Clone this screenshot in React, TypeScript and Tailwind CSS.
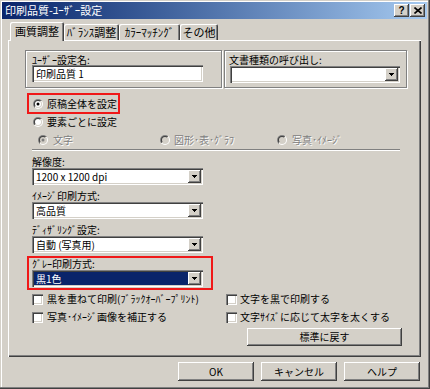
import React from "react";

// classic 3D edges
const SUNKEN = "shadow-[inset_1px_1px_0_#808080,inset_2px_2px_0_#404040,inset_-1px_-1px_0_#fff,inset_-2px_-2px_0_#d4d0c8]";
const RAISED = "shadow-[inset_-1px_-1px_0_#404040,inset_1px_1px_0_#fff,inset_-2px_-2px_0_#808080]";
const ETCHED = "border border-[#808080] shadow-[inset_1px_1px_0_#fff,1px_1px_0_#fff]";
const DISABLED = "text-[#808080] [text-shadow:1px_1px_0_#fff]";

function Arrow() {
    return (
        <svg width="5" height="3" viewBox="0 0 5 3" shapeRendering="crispEdges">
            <rect x="0" y="0" width="5" height="1" fill="#000" />
            <rect x="1" y="1" width="3" height="1" fill="#000" />
            <rect x="2" y="2" width="1" height="1" fill="#000" />
        </svg>
    );
}

function Select({ value, className, highlight }: { value: string; className: string; highlight?: boolean }) {
    return (
        <div className={`flex h-[17px] bg-white p-[2px] ${SUNKEN} ${className}`}>
            <div className={`flex-1 flex items-center pl-[2px] leading-none ${highlight ? "bg-[#0a246a] text-white" : ""}`}>
                {value}
            </div>
            <div className={`w-[13px] h-full bg-[#d4d0c8] flex items-center justify-center ${RAISED}`}>
                <Arrow />
            </div>
        </div>
    );
}

function Radio({ checked, disabled }: { checked?: boolean; disabled?: boolean }) {
    return (
        <svg width="10" height="10" viewBox="0 0 10 10" className="shrink-0">
            <defs>
                <linearGradient id="rOuter" x1="0" y1="0" x2="1" y2="1">
                    <stop offset="0.5" stopColor="#808080" />
                    <stop offset="0.5" stopColor="#ffffff" />
                </linearGradient>
                <linearGradient id="rInner" x1="0" y1="0" x2="1" y2="1">
                    <stop offset="0.5" stopColor="#404040" />
                    <stop offset="0.5" stopColor="#d4d0c8" />
                </linearGradient>
            </defs>
            <circle cx="5" cy="5" r="5" fill="url(#rOuter)" />
            <circle cx="5" cy="5" r="4" fill="url(#rInner)" />
            <circle cx="5" cy="5" r="3" fill={disabled ? "#d4d0c8" : "#fff"} />
            {checked && <circle cx="5" cy="5" r="1.5" fill={disabled ? "#808080" : "#000"} />}
        </svg>
    );
}

function Check() {
    return <div className={`w-[11px] h-[11px] shrink-0 bg-white ${SUNKEN}`} />;
}

function Button({ children, className }: { children: React.ReactNode; className: string }) {
    return (
        <div className={`flex items-center justify-center bg-[#d4d0c8] leading-none ${RAISED} ${className}`}>
            {children}
        </div>
    );
}

function Field({ label, value, highlight }: { label: string; value: string; highlight?: boolean }) {
    return (
        <div className="flex flex-col">
            <div className="h-[12px] leading-[12px]">{label}</div>
            <Select value={value} className="w-[171px]" highlight={highlight} />
        </div>
    );
}

const TABS = [
    { label: "ﾊﾞﾗﾝｽ調整", w: "w-[55px]" },
    { label: "ｶﾗｰﾏｯﾁﾝｸﾞ", w: "w-[61px]" },
    { label: "その他", w: "w-[38px]" },
];

export default function App() {
    return (
        <div className="w-[430px] h-[389px] overflow-hidden bg-[#d4d0c8] pt-[2px] pl-[2px] text-[10px] text-black font-['Noto_Sans_CJK_JP',sans-serif] shadow-[inset_-1px_-1px_0_#404040,inset_-2px_-2px_0_#808080,inset_1px_1px_0_#d4d0c8,inset_2px_2px_0_#fff]">
            {/* Title bar */}
            <div className="w-[425px] h-[17px] flex items-center pl-[3px] pr-[2px] bg-linear-to-r from-[#0a246a] to-[#a6caf0]">
                <span className="text-white text-[11px] leading-none">印刷品質-ﾕｰｻﾞｰ設定</span>
                <div className="ml-auto flex">
                    <Button className="w-[15px] h-[13px] font-bold text-[10px] font-['Liberation_Sans',sans-serif]">?</Button>
                    <Button className="w-[15px] h-[13px] ml-px">
                        <svg width="8" height="7" viewBox="0 0 8 7">
                            <path d="M0.5 0.5 L7.5 6.5 M7.5 0.5 L0.5 6.5" stroke="#000" strokeWidth="1.6" />
                        </svg>
                    </Button>
                </div>
            </div>

            {/* Tabs */}
            <div className="relative z-10 flex items-end h-[18px] mt-[3px] ml-[8px] text-[11px]">
                <div className="w-[54px] h-[19px] -mb-px flex items-center justify-center bg-[#d4d0c8] rounded-t-[2px] leading-none shadow-[inset_1px_1px_0_#fff,inset_-1px_0_0_#404040,inset_-2px_0_0_#808080]">
                    画質調整
                </div>
                {TABS.map((t) => (
                    <div
                        key={t.label}
                        className={`${t.w} h-[16px] flex items-center justify-center rounded-t-[2px] leading-none shadow-[inset_1px_1px_0_#fff,inset_-1px_0_0_#404040,inset_-2px_0_0_#808080]`}
                    >
                        {t.label}
                    </div>
                ))}
            </div>

            {/* Tab panel */}
            <div className="w-[413px] h-[317px] ml-[6px] pt-[10px] flex flex-col shadow-[inset_1px_1px_0_#fff,inset_-1px_-1px_0_#404040,inset_-2px_-2px_0_#808080]">
                {/* Name / document type */}
                <div className="flex ml-[17px]">
                    <div className={`w-[197px] h-[38px] pt-[4px] pl-[6px] ${ETCHED}`}>
                        <div className="h-[10px] leading-[10px]">ﾕｰｻﾞｰ設定名:</div>
                        <div className={`w-[171px] h-[17px] bg-white flex items-center pl-[4px] leading-none ${SUNKEN}`}>印刷品質 1</div>
                    </div>
                    <div className={`w-[183px] h-[38px] ml-[2px] pt-[4px] pl-[4px] ${ETCHED}`}>
                        <div className="h-[11px] leading-[10px]">文書種類の呼び出し:</div>
                        <Select value="" className="w-[170px] ml-px" />
                    </div>
                </div>

                {/* Setting scope */}
                <div className="mt-[5px] ml-[19px] w-[93px] h-[21px] border-2 border-[#f01818] flex items-center gap-[4px] pl-[4px]">
                    <Radio checked />
                    <span className="leading-none">原稿全体を設定</span>
                </div>
                <div className="mt-[2px] ml-[25px] h-[12px] flex items-center gap-[4px]">
                    <Radio />
                    <span className="leading-none">要素ごとに設定</span>
                </div>
                <div className={`mt-[6px] ml-[30px] h-[12px] flex items-center ${DISABLED}`}>
                    <div className="w-[122px] flex items-center gap-[5px]">
                        <Radio checked disabled />
                        <span className="leading-none">文字</span>
                    </div>
                    <div className="w-[117px] flex items-center gap-[4px]">
                        <Radio disabled />
                        <span className="leading-none">図形･表･ｸﾞﾗﾌ</span>
                    </div>
                    <div className="flex items-center gap-[5px]">
                        <Radio disabled />
                        <span className="leading-none">写真･ｲﾒｰｼﾞ</span>
                    </div>
                </div>
                <div className="mt-[3px] ml-[24px] w-[368px] h-[2px] border-t border-t-[#808080] border-b border-b-white" />

                {/* Print fields */}
                <div className="mt-[5px] ml-[24px]">
                    <Field label="解像度:" value="1200 x 1200 dpi" />
                </div>
                <div className="mt-[5px] ml-[24px]">
                    <Field label="ｲﾒｰｼﾞ印刷方式:" value="高品質" />
                </div>
                <div className="mt-[5px] ml-[24px]">
                    <Field label="ﾃﾞｨｻﾞﾘﾝｸﾞ設定:" value="自動 (写真用)" />
                </div>
                <div className="mt-[3px] ml-[19px] w-[186px] h-[34px] border-2 border-[#f01818] pl-[3px]">
                    <Field label="ｸﾞﾚｰ印刷方式:" value="黒1色" highlight />
                </div>

                {/* Options */}
                <div className="mt-[3px] ml-[24px] h-[12px] flex items-center">
                    <div className="w-[194px] flex items-center gap-[4px]">
                        <Check />
                        <span className="leading-none">黒を重ねて印刷(ﾌﾞﾗｯｸｵｰﾊﾞｰﾌﾟﾘﾝﾄ)</span>
                    </div>
                    <div className="flex items-center gap-[3px]">
                        <Check />
                        <span className="leading-none">文字を黒で印刷する</span>
                    </div>
                </div>
                <div className="mt-[6px] ml-[24px] h-[12px] flex items-center">
                    <div className="w-[194px] flex items-center gap-[4px]">
                        <Check />
                        <span className="leading-none">写真･ｲﾒｰｼﾞ画像を補正する</span>
                    </div>
                    <div className="flex items-center gap-[3px]">
                        <Check />
                        <span className="leading-none">文字ｻｲｽﾞに応じて太字を太くする</span>
                    </div>
                </div>
                <Button className="mt-[5px] ml-[239px] w-[155px] h-[18px]">標準に戻す</Button>
            </div>

            {/* Dialog buttons */}
            <div className="mt-[5px] ml-[176px] flex gap-[7px]">
                <Button className="w-[76px] h-[19px]">OK</Button>
                <Button className="w-[76px] h-[19px]">キャンセル</Button>
                <Button className="w-[76px] h-[19px]">ヘルプ</Button>
            </div>
        </div>
    );
}
